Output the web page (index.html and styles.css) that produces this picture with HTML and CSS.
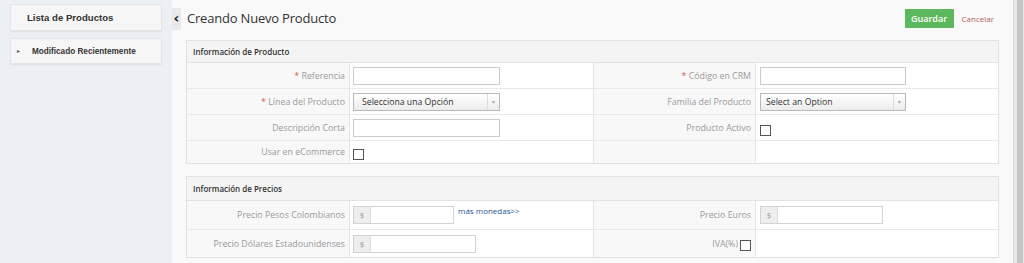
FILE: index.html
```html
<!DOCTYPE html>
<html lang="es">
<head>
    <meta charset="UTF-8">
    <meta name="viewport" content="width=device-width, initial-scale=1.0">
    <title>Creando Nuevo Producto</title>
    <link rel="stylesheet" href="styles.css">
</head>
<body>

    <div class="app">
        <!-- Barra lateral -->
        <aside class="sidebar">
            <div class="side-box side-title">Lista de Productos</div>
            <div class="side-box side-item"><span class="bullet">&#9658;</span>Modificado Recientemente</div>
        </aside>

        <div class="toggle">&#8249;</div>

        <main class="content">
            <div class="topbar">
                <h1>Creando Nuevo Producto</h1>
                <div class="actions">
                    <button class="btn-save">Guardar</button>
                    <a href="#" class="btn-cancel">Cancelar</a>
                </div>
            </div>

            <!-- Información de Producto -->
            <section class="panel">
                <div class="panel-head">Información de Producto</div>
                <div class="grid">
                    <div class="lbl"><span class="req">*</span>&nbsp;Referencia</div>
                    <div class="fld"><input type="text" class="txt"></div>
                    <div class="lbl"><span class="req">*</span>&nbsp;Código en CRM</div>
                    <div class="fld right"><input type="text" class="txt"></div>

                    <div class="lbl"><span class="req">*</span>&nbsp;Línea del Producto</div>
                    <div class="fld"><div class="sel"><span>Selecciona una Opción</span><i class="arrow">&#9662;</i></div></div>
                    <div class="lbl">Familia del Producto</div>
                    <div class="fld right"><div class="sel"><span>Select an Option</span><i class="arrow">&#9662;</i></div></div>

                    <div class="lbl">Descripción Corta</div>
                    <div class="fld"><input type="text" class="txt"></div>
                    <div class="lbl">Producto Activo</div>
                    <div class="fld right"><span class="chk"></span></div>

                    <div class="lbl short">Usar en eCommerce</div>
                    <div class="fld short"><span class="chk"></span></div>
                    <div class="lbl short"></div>
                    <div class="fld right short empty"></div>
                </div>
            </section>

            <!-- Información de Precios -->
            <section class="panel prices">
                <div class="panel-head">Información de Precios</div>
                <div class="grid">
                    <div class="lbl">Precio Pesos Colombianos</div>
                    <div class="fld">
                        <div class="money w1"><span class="addon">$</span><input type="text"></div>
                        <a href="#" class="more">más monedas&gt;&gt;</a>
                    </div>
                    <div class="lbl">Precio Euros</div>
                    <div class="fld right"><div class="money w2"><span class="addon">$</span><input type="text"></div></div>

                    <div class="lbl">Precio Dólares Estadounidenses</div>
                    <div class="fld"><div class="money w2"><span class="addon">$</span><input type="text"></div></div>
                    <div class="lbl">IVA(%)<span class="chk inline"></span></div>
                    <div class="fld right empty"></div>
                </div>
            </section>
        </main>

        <div class="scrollbar"><div class="thumb"></div></div>
    </div>

</body>
</html>
```

FILE: styles.css
```css
body {
    margin: 0;
    padding: 0;
    font-family: 'Open Sans', sans-serif;
    background-color: #f9f9f9;
    overflow: hidden;
}

.app {
    display: flex;
    height: 263px;
}

/* barra lateral */
.sidebar {
    width: 172px;
    flex-shrink: 0;
    background-color: #edf0f3;
    padding: 4px 10px 0 10px;
    box-sizing: border-box;
}

.side-box {
    background-color: #f6f6f6;
    border: 1px solid #e2e4e6;
    box-shadow: 0 1px 1px rgba(0, 0, 0, 0.05);
    font-family: 'Liberation Sans', Arial, sans-serif;
    font-weight: bold;
    color: #333;
    display: flex;
    align-items: center;
}

.side-title {
    height: 25px;
    padding-left: 16px;
    font-size: 9.6px;
    margin-bottom: 7px;
}

.side-item {
    height: 24px;
    padding-left: 5px;
    font-size: 8.2px;
}

.bullet {
    font-size: 5px;
    color: #555;
    margin-right: 11px;
}

.toggle {
    width: 9px;
    flex-shrink: 0;
    height: 22px;
    margin-top: 8px;
    background-color: #e9e9e9;
    font-family: 'DejaVu Sans', sans-serif;
    font-weight: bold;
    font-size: 14px;
    line-height: 20px;
    color: #222;
    text-align: center;
}

/* contenido */
.content {
    flex: 1;
    padding: 0 14px 0 5px;
    box-sizing: border-box;
}

.topbar {
    display: flex;
    justify-content: space-between;
    align-items: center;
    height: 40px;
}

.topbar h1 {
    margin: 0 0 4px 1px;
    font-size: 13px;
    letter-spacing: -0.2px;
    font-weight: normal;
    color: #333;
}

.actions {
    display: flex;
    align-items: center;
    margin-bottom: 4px;
}

.btn-save {
    background-color: #5cb85c;
    color: #fff;
    border: none;
    font-family: 'Open Sans', sans-serif;
    font-weight: 600;
    font-size: 9px;
    height: 19px;
    width: 49px;
    padding: 0;
    border-radius: 1px;
}

.btn-cancel {
    color: #b45a5a;
    font-size: 8px;
    text-decoration: none;
    margin-left: 8px;
    margin-right: 5px;
}

.panel {
    border: 1px solid #e1e1e1;
    background-color: #fff;
}

.prices {
    margin-top: 12px;
}

.panel-head {
    height: 21px;
    line-height: 21px;
    background-color: #f4f4f4;
    border-bottom: 1px solid #e3e3e3;
    font-size: 8px;
    font-weight: 600;
    color: #333;
    padding-left: 6px;
}

.prices .panel-head {
    height: 23px;
    line-height: 23px;
}

.grid {
    display: grid;
    grid-template-columns: 163px 244px 162px 1fr;
}

.lbl {
    display: flex;
    align-items: center;
    justify-content: flex-end;
    padding-right: 4px;
    background-color: #f8f8f8;
    border-bottom: 1px solid #e8e8e8;
    border-right: 1px solid #e4e4e4;
    font-size: 8.8px;
    color: #9a9a9a;
    height: 25px;
}

.fld {
    display: flex;
    align-items: center;
    padding-left: 3px;
    border-bottom: 1px solid #e8e8e8;
    border-right: 1px solid #e4e4e4;
    height: 25px;
}

.fld.right {
    padding-left: 4px;
    border-right: none;
}

.lbl.short,
.fld.short {
    height: 22px;
    border-bottom: none;
}

.prices .lbl,
.prices .fld {
    height: 28px;
}

.prices .grid > :nth-last-child(-n+4) {
    height: 27px;
    border-bottom: none;
}

.req {
    color: #d9534f;
}

.txt {
    width: 147px;
    height: 18px;
    border: 1px solid #ccc;
    box-sizing: border-box;
    margin: 0;
    padding: 0;
}

.right .txt {
    width: 146px;
}

.sel {
    width: 147px;
    height: 18px;
    box-sizing: border-box;
    border: 1px solid #b9b9b9;
    background: linear-gradient(#ffffff, #ececec);
    display: flex;
    align-items: center;
    justify-content: space-between;
    font-size: 8.7px;
    color: #333;
    padding-left: 8px;
}

.right .sel {
    width: 146px;
    padding-left: 5px;
}

.arrow {
    font-style: normal;
    width: 11px;
    height: 16px;
    line-height: 16px;
    border-left: 1px solid #ddd;
    font-size: 6px;
    color: #aaa;
    text-align: center;
}

.chk {
    display: inline-block;
    width: 9px;
    height: 9px;
    border: 1px solid #555;
    background-color: #fff;
    margin-top: 5px;
}

.chk.inline {
    margin: 3px 0 0 2px;
}

.money {
    display: flex;
    height: 18px;
    border: 1px solid #d4d4d4;
    box-sizing: border-box;
}

.money.w1 {
    width: 101px;
}

.money.w2 {
    width: 123px;
}

.addon {
    width: 16px;
    background-color: #eee;
    border-right: 1px solid #ddd;
    font-size: 8px;
    color: #999;
    text-align: center;
    line-height: 16px;
}

.money input {
    flex: 1;
    min-width: 0;
    border: none;
    margin: 0;
    padding: 0;
}

.more {
    color: #1f5596;
    font-size: 8px;
    text-decoration: none;
    margin-left: 4px;
    align-self: flex-start;
    margin-top: 4px;
}

.scrollbar {
    width: 11px;
    flex-shrink: 0;
    background-color: #e8e8e8;
    border-left: 1px solid #dcdcdc;
    box-sizing: border-box;
    padding: 0 1px 0 3px;
}

.thumb {
    height: 100%;
    background-color: #c6c6c6;
}
```
